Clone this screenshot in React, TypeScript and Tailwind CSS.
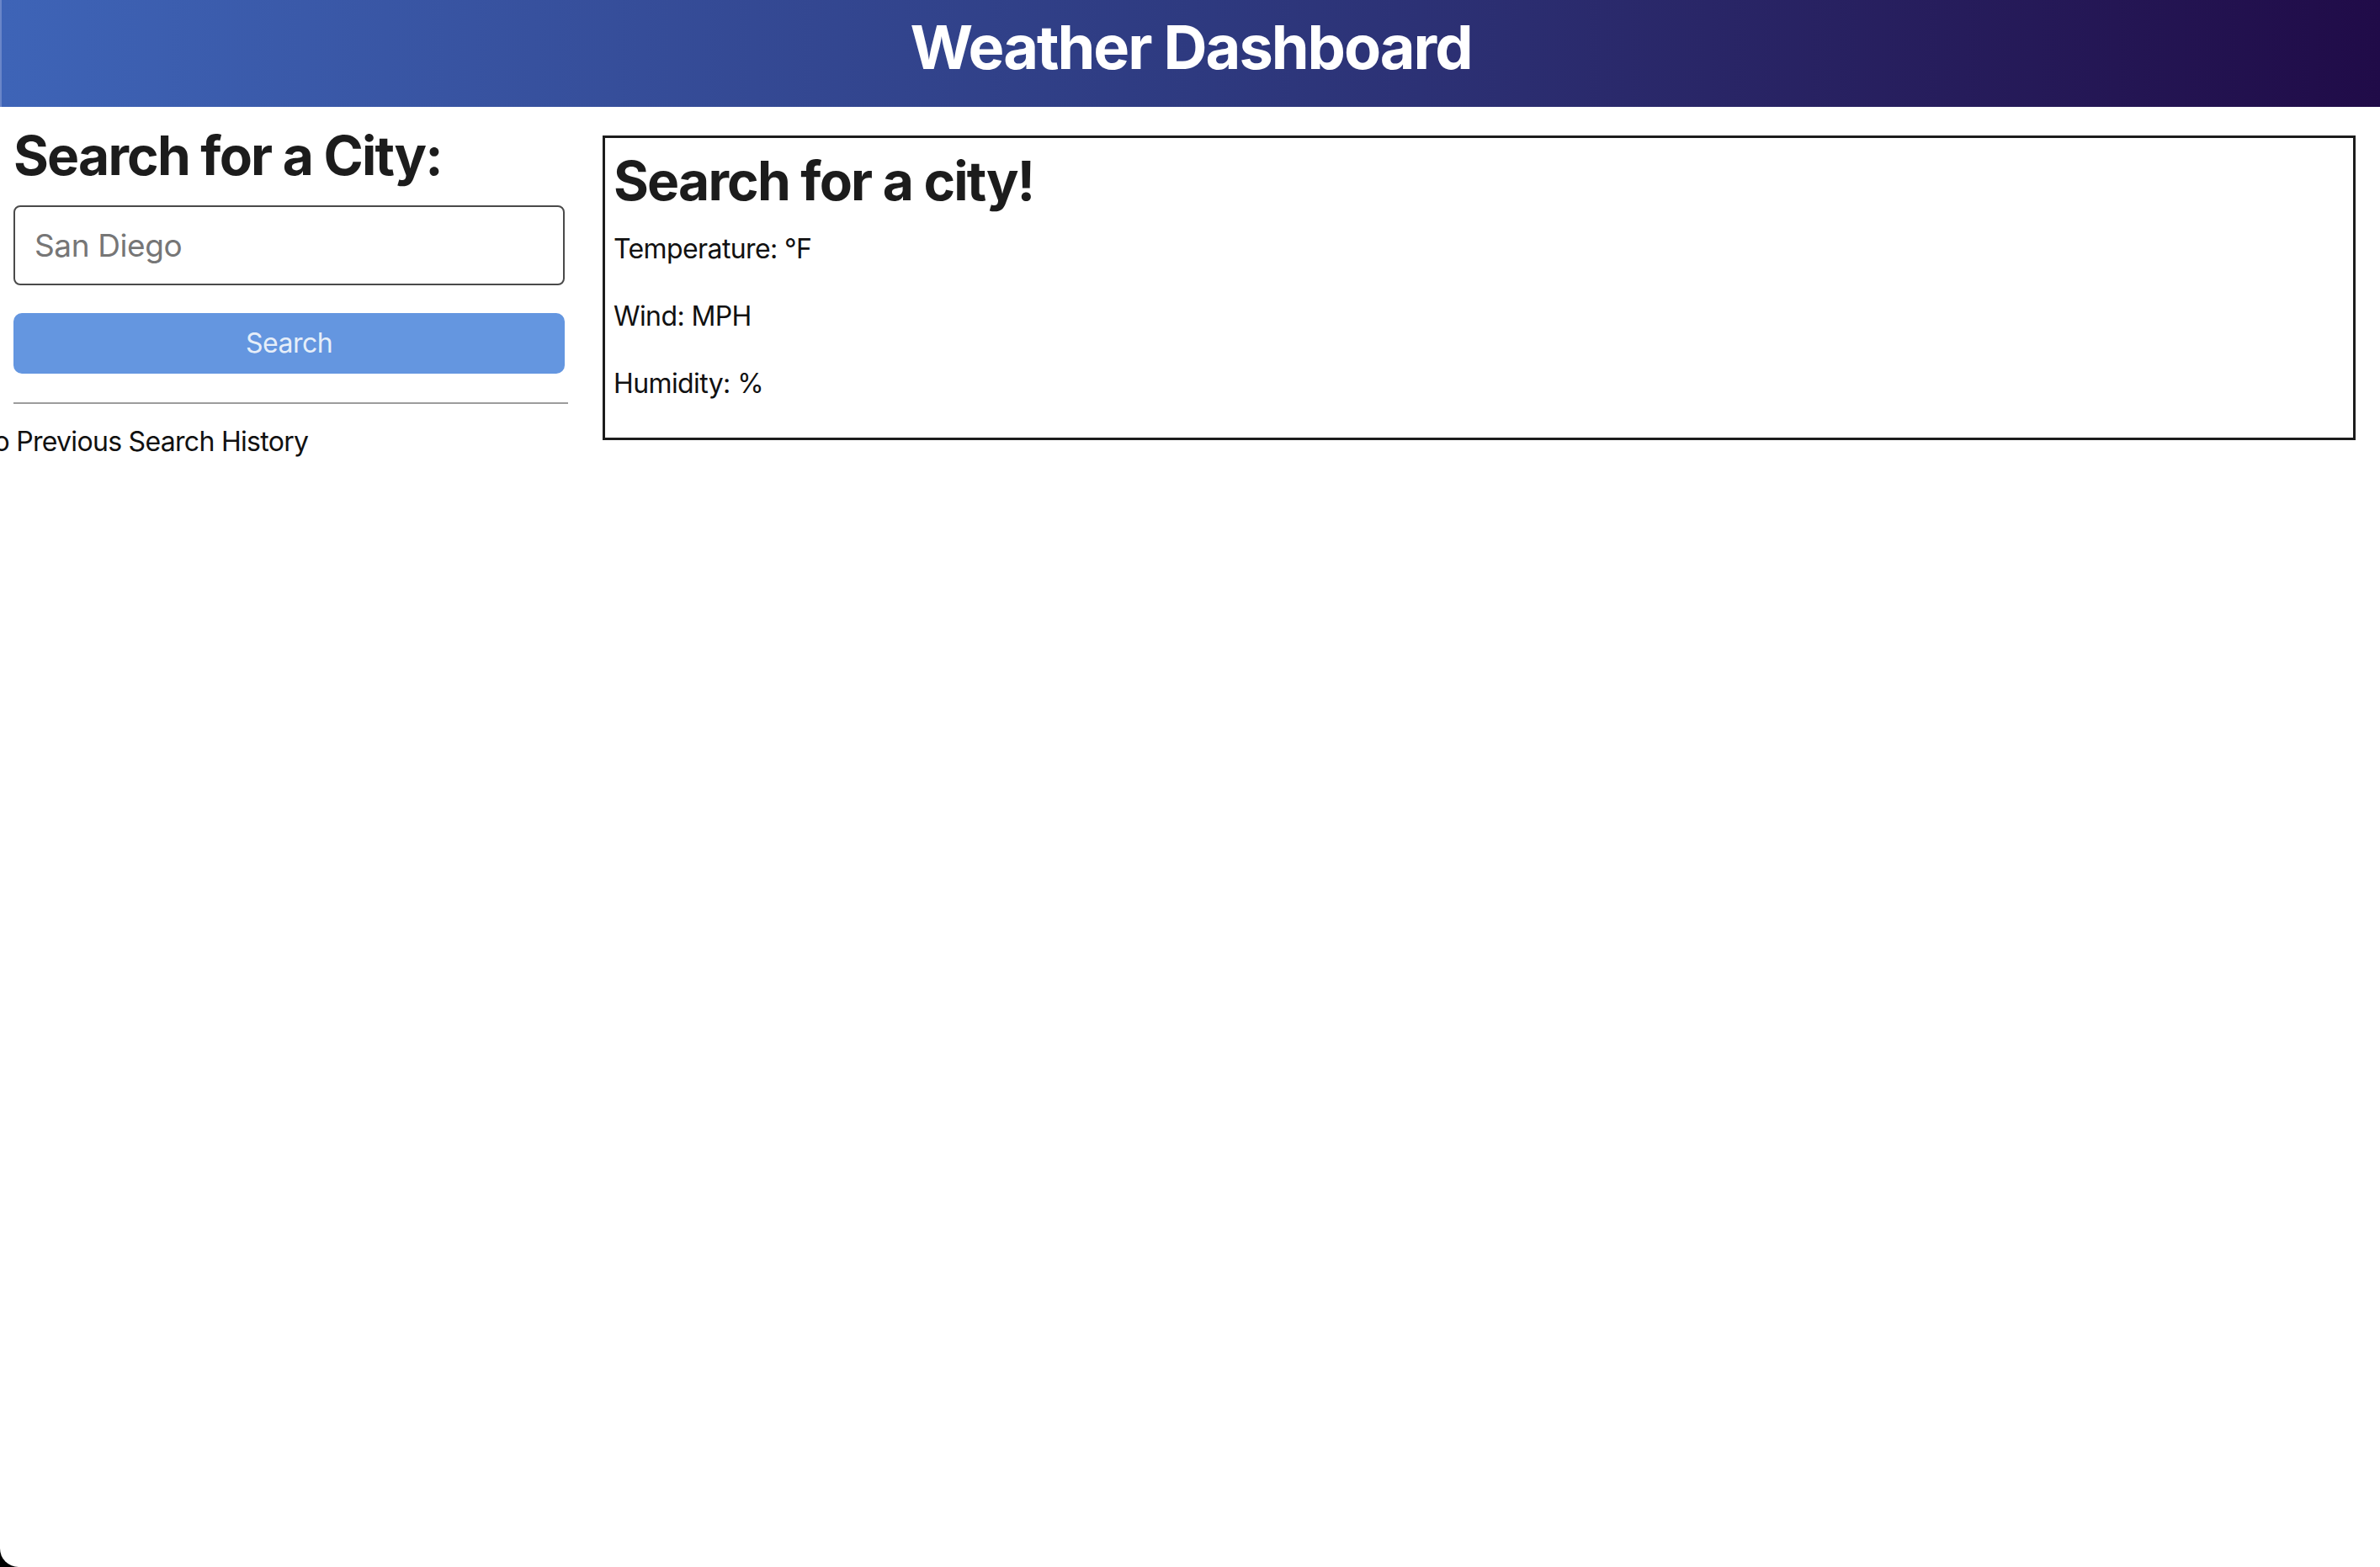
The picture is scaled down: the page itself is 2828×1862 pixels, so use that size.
import React, { useState } from 'react';

export default function App() {
  const [city, setCity] = useState('');

  return (
    <div className="min-h-screen bg-black" style={{ fontFamily: 'Inter, "Noto Sans", sans-serif' }}>
      <div className="min-h-[1862px] bg-white rounded-bl-[22px] overflow-hidden">
        {/* Header */}
        <header className="h-[127px] pb-[15px] flex items-center justify-center bg-gradient-to-r from-[#3e64b7] via-[#2e3a80] to-[#200b48] border-l-2 border-[#6a86c8]">
          <h1 className="text-[72px] leading-[72px] font-bold text-white tracking-[-2px]">Weather Dashboard</h1>
        </header>

        <main className="flex gap-[41px] pr-[29px]">
          {/* Search column */}
          <aside className="w-[675px] shrink-0 pl-[16px]">
            <h2 className="mt-[19px] text-[64px] leading-[77px] font-bold text-[#1c1c1c] tracking-[-1.8px] whitespace-nowrap">Search for a City:</h2>
            <input
              type="text"
              value={city}
              onChange={e => setCity(e.target.value)}
              placeholder="San Diego"
              className="mt-[21px] w-[655px] h-[95px] px-[23px] rounded-[8px] border-2 border-[#4a4a4a] text-[37px] tracking-[-0.4px] text-[#222] placeholder:text-[#767676] outline-none"
            />
            <button className="mt-[33px] w-[655px] h-[72px] rounded-[10px] bg-[#6496e0] text-[32px] tracking-[-0.5px] text-[#e6eef9]">
              Search
            </button>
            <hr className="mt-[34px] w-[659px] border-0 border-t-2 border-[#9c9c9c]" />
            <ul className="mt-[21px] -ml-[47px] text-[32px] leading-[48px] tracking-[-0.7px] text-[#111] whitespace-nowrap">
              <li>No Previous Search History</li>
            </ul>
          </aside>

          {/* Current weather */}
          <section className="flex-1 mt-[34px] self-start border-[3px] border-[#1c1c1c] px-[10px] pt-[12px] pb-[11px]">
            <h2 className="text-[64px] leading-[77px] font-bold text-[#1c1c1c] tracking-[-1.8px]">Search for a city!</h2>
            <div className="mt-[19px] text-[32px] leading-[48px] tracking-[-0.6px] text-[#111]">
              <p className="mb-[32px]">Temperature: °F</p>
              <p className="mb-[32px]">Wind: MPH</p>
              <p className="mb-[29px]">Humidity: %</p>
            </div>
          </section>
        </main>
      </div>
    </div>
  );
}
